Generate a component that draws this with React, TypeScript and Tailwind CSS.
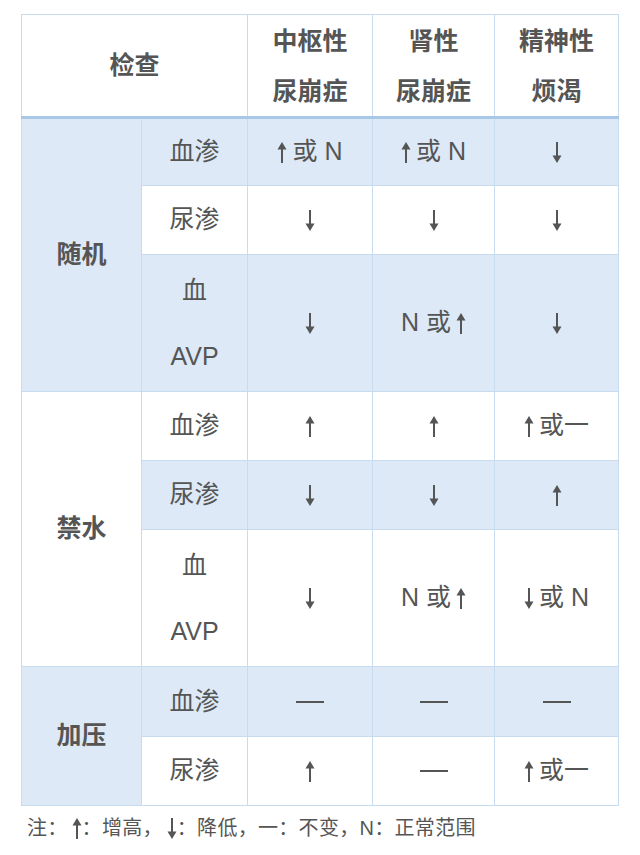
import React from 'react'

const Up = () => (
    <svg width="10" height="23" viewBox="0 0 10 23" className="inline-block">
        <path d="M5 1 L9.5 8.5 L0.5 8.5 Z" fill="#555" />
        <rect x="4" y="7" width="2" height="15" fill="#555" />
    </svg>
)

const Down = () => (
    <svg width="10" height="23" viewBox="0 0 10 23" className="inline-block">
        <rect x="4" y="1" width="2" height="15" fill="#555" />
        <path d="M5 22 L9.5 14.5 L0.5 14.5 Z" fill="#555" />
    </svg>
)

const Dash = () => <span className="inline-block w-[28px] h-[2px] bg-[#555] align-middle" />

type Val = 'up' | 'down' | 'dash' | 'upN' | 'Nup' | 'downN' | 'upDash'

const Value = ({ v }: { v: Val }) => {
    switch (v) {
        case 'up':
            return <Up />
        case 'down':
            return <Down />
        case 'dash':
            return <Dash />
        case 'upN':
            return (
                <span className="inline-flex items-center gap-[5px]">
                    <Up />
                    <span>或</span>
                    <span className="ml-[2px]">N</span>
                </span>
            )
        case 'Nup':
            return (
                <span className="inline-flex items-center gap-[5px]">
                    <span className="mr-[2px]">N</span>
                    <span>或</span>
                    <Up />
                </span>
            )
        case 'downN':
            return (
                <span className="inline-flex items-center gap-[5px]">
                    <Down />
                    <span>或</span>
                    <span className="ml-[2px]">N</span>
                </span>
            )
        case 'upDash':
            return (
                <span className="inline-flex items-center gap-[5px]">
                    <Up />
                    <span>或一</span>
                </span>
            )
    }
}

type Row = { label: string; vals: Val[]; blue: boolean; h: string; avp?: boolean }

const groups: { name: string; blue: boolean; rows: Row[] }[] = [
    {
        name: '随机',
        blue: true,
        rows: [
            { label: '血渗', vals: ['upN', 'upN', 'down'], blue: true, h: 'h-[68px]' },
            { label: '尿渗', vals: ['down', 'down', 'down'], blue: false, h: 'h-[69px]' },
            { label: '血', vals: ['down', 'Nup', 'down'], blue: true, h: 'h-[137px]', avp: true },
        ],
    },
    {
        name: '禁水',
        blue: false,
        rows: [
            { label: '血渗', vals: ['up', 'up', 'upDash'], blue: false, h: 'h-[69px]' },
            { label: '尿渗', vals: ['down', 'down', 'up'], blue: true, h: 'h-[69px]' },
            { label: '血', vals: ['down', 'Nup', 'downN'], blue: false, h: 'h-[137px]', avp: true },
        ],
    },
    {
        name: '加压',
        blue: true,
        rows: [
            { label: '血渗', vals: ['dash', 'dash', 'dash'], blue: true, h: 'h-[70px]' },
            { label: '尿渗', vals: ['up', 'dash', 'upDash'], blue: false, h: 'h-[69px]' },
        ],
    },
]

const cell = 'border border-[#c9dcef] text-center align-middle p-0'

const App: React.FC = () => {
    return (
        <div className="bg-white w-[640px] h-[855px] pt-[14px] text-[#555] font-['Liberation_Sans','Noto_Sans_CJK_SC',sans-serif]">
            <table className="ml-[21px] w-[597px] table-fixed border-collapse text-[25px]">
                <colgroup>
                    <col className="w-[120px]" />
                    <col className="w-[106px]" />
                    <col className="w-[125px]" />
                    <col className="w-[122px]" />
                    <col className="w-[124px]" />
                </colgroup>
                <thead>
                    {/* Header */}
                    <tr className="h-[103px] bg-white">
                        <th colSpan={2} className={`${cell} font-bold border-b-[3px] border-b-[#a9c7e6]`}>检查</th>
                        <th className={`${cell} font-bold border-b-[3px] border-b-[#a9c7e6]`}>
                            <div className="leading-[50px]">中枢性</div>
                            <div className="leading-[50px]">尿崩症</div>
                        </th>
                        <th className={`${cell} font-bold border-b-[3px] border-b-[#a9c7e6]`}>
                            <div className="leading-[50px]">肾性</div>
                            <div className="leading-[50px]">尿崩症</div>
                        </th>
                        <th className={`${cell} font-bold border-b-[3px] border-b-[#a9c7e6]`}>
                            <div className="leading-[50px]">精神性</div>
                            <div className="leading-[50px]">烦渴</div>
                        </th>
                    </tr>
                </thead>
                <tbody>
                    {groups.map((g) =>
                        g.rows.map((r, i) => (
                            <tr key={g.name + i} className={r.h}>
                                {i === 0 && (
                                    <td
                                        rowSpan={g.rows.length}
                                        className={`${cell} font-bold ${g.blue ? 'bg-[#dde9f6]' : 'bg-white'}`}
                                    >
                                        {g.name}
                                    </td>
                                )}
                                <td className={`${cell} ${r.blue ? 'bg-[#dde9f6]' : 'bg-white'}`}>
                                    {r.avp ? (
                                        <div className="flex flex-col items-center gap-[34px] leading-[32px]">
                                            <span>血</span>
                                            <span>AVP</span>
                                        </div>
                                    ) : (
                                        r.label
                                    )}
                                </td>
                                {r.vals.map((v, j) => (
                                    <td key={j} className={`${cell} ${r.blue ? 'bg-[#dde9f6]' : 'bg-white'}`}>
                                        <div className="flex items-center justify-center">
                                            <Value v={v} />
                                        </div>
                                    </td>
                                ))}
                            </tr>
                        ))
                    )}
                </tbody>
            </table>

            {/* Note */}
            <div className="mt-[7px] ml-[27px] text-[20px] leading-[30px] tracking-[0.3px] flex items-center">
                <span>注：</span>
                <span className="ml-[4px] inline-flex">
                    <Up />
                </span>
                <span>：增高，</span>
                <span className="ml-[4px] inline-flex">
                    <Down />
                </span>
                <span>：降低，一：不变，N：正常范围</span>
            </div>
        </div>
    )
}

export default App
